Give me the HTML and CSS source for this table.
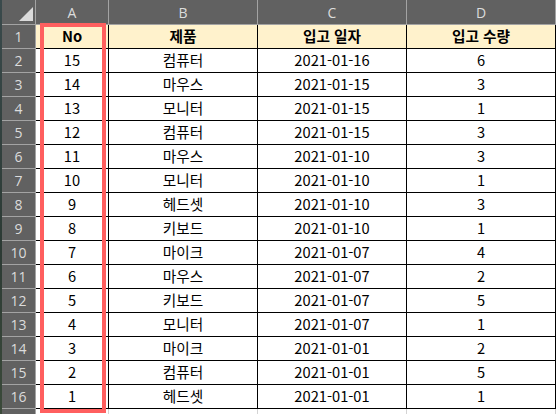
FILE: index.html
```html
<!DOCTYPE html>
<html lang="ko">
<head>
<meta charset="utf-8">
<link rel="stylesheet" href="styles.css">
</head>
<body>
<div class="screen">
  <div class="strip"></div>
  <div class="sheet">
    <div class="grid">
      <div class="corner"><span class="tri"></span></div>
      <div class="colhead">A</div>
      <div class="colhead">B</div>
      <div class="colhead">C</div>
      <div class="colhead last">D</div>

      <div class="rowhead">1</div>
      <div class="cell hdr">No</div><div class="cell hdr">제품</div><div class="cell hdr">입고 일자</div><div class="cell hdr">입고 수량</div>

      <div class="rowhead">2</div>
      <div class="cell">15</div><div class="cell">컴퓨터</div><div class="cell">2021-01-16</div><div class="cell">6</div>
      <div class="rowhead">3</div>
      <div class="cell">14</div><div class="cell">마우스</div><div class="cell">2021-01-15</div><div class="cell">3</div>
      <div class="rowhead">4</div>
      <div class="cell">13</div><div class="cell">모니터</div><div class="cell">2021-01-15</div><div class="cell">1</div>
      <div class="rowhead">5</div>
      <div class="cell">12</div><div class="cell">컴퓨터</div><div class="cell">2021-01-15</div><div class="cell">3</div>
      <div class="rowhead">6</div>
      <div class="cell">11</div><div class="cell">마우스</div><div class="cell">2021-01-10</div><div class="cell">3</div>
      <div class="rowhead">7</div>
      <div class="cell">10</div><div class="cell">모니터</div><div class="cell">2021-01-10</div><div class="cell">1</div>
      <div class="rowhead">8</div>
      <div class="cell">9</div><div class="cell">헤드셋</div><div class="cell">2021-01-10</div><div class="cell">3</div>
      <div class="rowhead">9</div>
      <div class="cell">8</div><div class="cell">키보드</div><div class="cell">2021-01-10</div><div class="cell">1</div>
      <div class="rowhead">10</div>
      <div class="cell">7</div><div class="cell">마이크</div><div class="cell">2021-01-07</div><div class="cell">4</div>
      <div class="rowhead">11</div>
      <div class="cell">6</div><div class="cell">마우스</div><div class="cell">2021-01-07</div><div class="cell">2</div>
      <div class="rowhead">12</div>
      <div class="cell">5</div><div class="cell">키보드</div><div class="cell">2021-01-07</div><div class="cell">5</div>
      <div class="rowhead">13</div>
      <div class="cell">4</div><div class="cell">모니터</div><div class="cell">2021-01-07</div><div class="cell">1</div>
      <div class="rowhead">14</div>
      <div class="cell">3</div><div class="cell">마이크</div><div class="cell">2021-01-01</div><div class="cell">2</div>
      <div class="rowhead">15</div>
      <div class="cell">2</div><div class="cell">컴퓨터</div><div class="cell">2021-01-01</div><div class="cell">5</div>
      <div class="rowhead">16</div>
      <div class="cell">1</div><div class="cell">헤드셋</div><div class="cell">2021-01-01</div><div class="cell">1</div>

      <div class="rowhead tail"></div>
      <div class="cell tail"></div><div class="cell tail"></div><div class="cell tail"></div><div class="cell tail"></div>
    </div>
    <div class="highlight"></div>
  </div>
</div>
</body>
</html>
```

FILE: styles.css
```css
html, body {
  margin: 0;
  padding: 0;
  background: #ffffff;
}

.screen {
  display: flex;
  width: 557px;
  height: 414px;
  overflow: hidden;
}

.strip {
  width: 2px;
  flex: none;
  background: linear-gradient(#3a4a4c, #2c3a34 60%, #3b4a3a);
}

.sheet {
  position: relative;
  flex: none;
}

.grid {
  display: grid;
  grid-template-columns: 34px 73px 149px 149px 149px;
  grid-template-rows: 25px repeat(16, 24px) 6px;
  font-family: "Noto Sans CJK KR", "Noto Sans", sans-serif;
  font-size: 14.67px;
}

.corner {
  background: #616161;
  border-right: 1px solid #a3a3a3;
  border-bottom: 1px solid #a3a3a3;
  position: relative;
}

.tri {
  position: absolute;
  right: 2px;
  bottom: 3px;
  width: 0;
  height: 0;
  border-left: 14px solid transparent;
  border-bottom: 14px solid #dadada;
}

.colhead {
  background: #616161;
  color: #dcdcdc;
  border-right: 1px solid #a3a3a3;
  border-bottom: 1px solid #a3a3a3;
  display: flex;
  align-items: center;
  justify-content: center;
  font-family: "Open Sans", "Noto Sans", sans-serif;
  font-size: 14px;
  padding-top: 1px;
}

.colhead.last {
  border-right: 1px solid #a3a3a3;
}

.rowhead {
  background: #616161;
  color: #dcdcdc;
  border-right: 1px solid #a3a3a3;
  border-bottom: 1px solid #a3a3a3;
  display: flex;
  align-items: center;
  justify-content: center;
  font-family: "Open Sans", "Noto Sans", sans-serif;
  font-size: 14px;
}

.cell {
  background: #ffffff;
  color: #000000;
  border-right: 1px solid #000000;
  border-bottom: 1px solid #000000;
  display: flex;
  align-items: center;
  justify-content: center;
  line-height: 1;
}

.cell.hdr {
  background: #fff2cc;
  font-weight: bold;
}

.rowhead.tail {
  border-bottom: none;
}

.cell.tail {
  border-right: 1px solid #d4d4d4;
  border-bottom: none;
}

.highlight {
  position: absolute;
  left: 38px;
  top: 23px;
  width: 58px;
  height: 382px;
  border: 4px solid #ff5f5f;
  pointer-events: none;
}
```
